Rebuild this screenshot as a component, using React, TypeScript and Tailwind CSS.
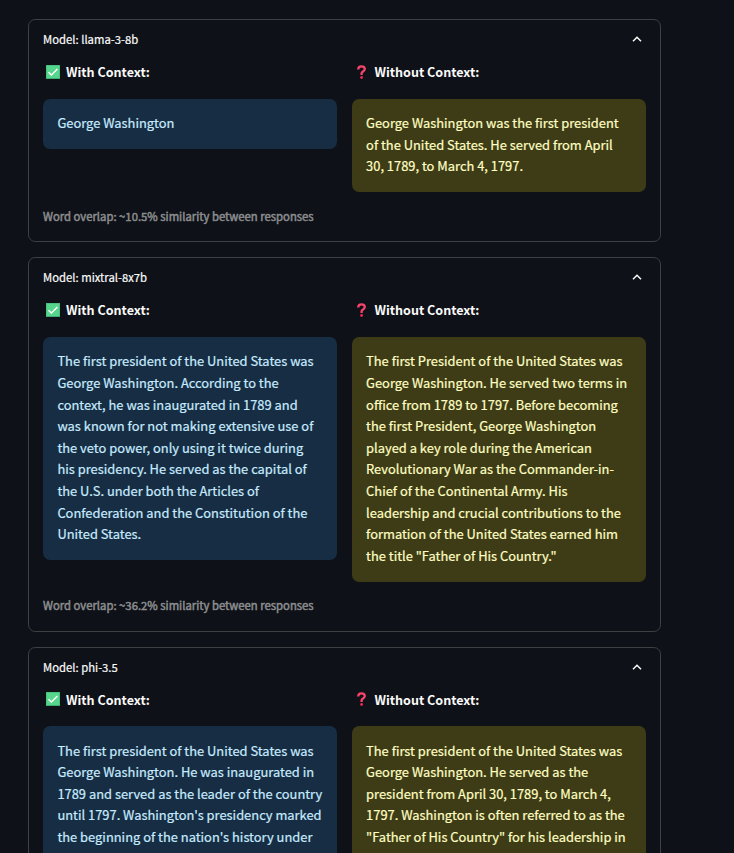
type Model = { name: string; withContext: string; withoutContext: string; overlap?: string };

const models: Model[] = [
  {
    name: 'llama-3-8b',
    withContext: 'George Washington',
    withoutContext:
      'George Washington was the first president\nof the United States. He served from April\n30, 1789, to March 4, 1797.',
    overlap: '10.5%',
  },
  {
    name: 'mixtral-8x7b',
    withContext:
      'The first president of the United States was\nGeorge Washington. According to the\ncontext, he was inaugurated in 1789 and\nwas known for not making extensive use of\nthe veto power, only using it twice during\nhis presidency. He served as the capital of\nthe U.S. under both the Articles of\nConfederation and the Constitution of the\nUnited States.',
    withoutContext:
      'The first President of the United States was\nGeorge Washington. He served two terms in\noffice from 1789 to 1797. Before becoming\nthe first President, George Washington\nplayed a key role during the American\nRevolutionary War as the Commander-in-\nChief of the Continental Army. His\nleadership and crucial contributions to the\nformation of the United States earned him\nthe title "Father of His Country."',
    overlap: '36.2%',
  },
  {
    name: 'phi-3.5',
    withContext:
      "The first president of the United States was\nGeorge Washington. He was inaugurated in\n1789 and served as the leader of the country\nuntil 1797. Washington's presidency marked\nthe beginning of the nation's history under",
    withoutContext:
      'The first president of the United States was\nGeorge Washington. He served as the\npresident from April 30, 1789, to March 4,\n1797. Washington is often referred to as the\n"Father of His Country" for his leadership in',
  },
];

function CheckIcon() {
  return (
    <svg className="ml-[3px] h-3.5 w-3.5 shrink-0" viewBox="0 0 14 14">
      <rect width="14" height="14" fill="#3fae72" />
      <rect x="0.5" y="0.5" width="13" height="12.5" fill="#56d58c" />
      <path d="M2.5 7.2 5.4 10.1 11.4 4.1" fill="none" stroke="#fff" strokeWidth="1.4" />
    </svg>
  );
}

function QuestionIcon() {
  return (
    <svg className="ml-[5px] h-3.5 w-[9px] shrink-0" viewBox="0 0 9 14">
      <path
        d="M1.2 4.4C1.2 2.5 2.5 1.3 4.5 1.3S7.8 2.4 7.8 4.1C7.8 6.4 4.6 6.4 4.6 8.3V10"
        fill="none"
        stroke="#f8436b"
        strokeWidth="2.3"
      />
      <circle cx="4.6" cy="12.5" r="1.4" fill="#f02a50" />
    </svg>
  );
}

function Chevron() {
  return (
    <svg className="mb-[3px] h-[6px] w-[10px]" viewBox="0 0 10 6">
      <path d="M1 5.2 5 1.2 9 5.2" fill="none" stroke="#fafafa" strokeWidth="1.5" />
    </svg>
  );
}

function Card({ model }: { model: Model }) {
  return (
    <section className="rounded-[7.2px] border border-[#3e4044] px-3.5 pb-[14px]">
      <header className="flex h-[41.1px] items-center justify-between pr-1">
        <h2 className="pb-[1.2px] text-[11.3px] [-webkit-text-stroke:0.2px]">Model: {model.name}</h2>
        <Chevron />
      </header>
      <div className="grid grid-cols-2 gap-[14.4px]">
        <div>
          <h3 className="flex h-[21.6px] items-center gap-[6px] text-[12.55px] font-bold">
            <CheckIcon />
            With Context:
          </h3>
          <p className="mt-[15.9px] rounded-[7.2px] bg-[#172d43] px-[14.4px] pt-[13.6px] pb-[15.2px] whitespace-pre text-[#c7ebff] [-webkit-text-stroke:0.2px]">
            {model.withContext}
          </p>
        </div>
        <div>
          <h3 className="flex h-[21.6px] items-center gap-[8.8px] text-[12.55px] font-bold">
            <QuestionIcon />
            Without Context:
          </h3>
          <p className="mt-[15.9px] rounded-[7.2px] bg-[#3e3b17] px-[14.4px] pt-[13.6px] pb-[15.2px] whitespace-pre text-[#ffffc2] [-webkit-text-stroke:0.2px]">
            {model.withoutContext}
          </p>
        </div>
      </div>
      {model.overlap && (
        <p className="mt-[13.6px] text-[11.3px] text-[#8b8c8e] [-webkit-text-stroke:0.5px]">
          Word overlap: ~{model.overlap} similarity between responses
        </p>
      )}
    </section>
  );
}

export default function App() {
  return (
    <main className="h-[853px] overflow-hidden bg-[#0e1117] pt-[19.1px] pl-7 font-['Noto_Sans_CJK_SC',sans-serif] text-[12.9px] leading-[21.6px] text-[#fafafa]">
      <div className="flex w-[633px] flex-col gap-[14.8px]">
        {models.map((m) => (
          <Card key={m.name} model={m} />
        ))}
      </div>
    </main>
  );
}
